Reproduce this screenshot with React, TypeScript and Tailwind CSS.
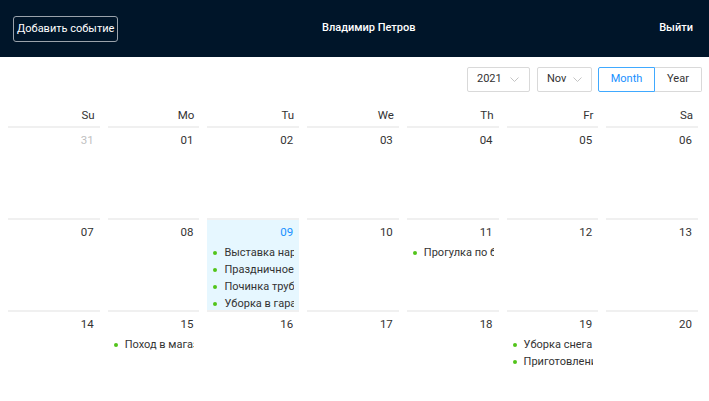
import React from "react"

type Day = {
    day: string
    muted?: boolean
    today?: boolean
    events?: string[]
}

const weekDays = ["Su", "Mo", "Tu", "We", "Th", "Fr", "Sa"]

const rows: Day[][] = [
    [
        { day: "31", muted: true },
        { day: "01" },
        { day: "02" },
        { day: "03" },
        { day: "04" },
        { day: "05" },
        { day: "06" },
    ],
    [
        { day: "07" },
        { day: "08" },
        { day: "09", today: true, events: ["Выставка народного творчества", "Праздничное чаепитие", "Починка трубы", "Уборка в гараже"] },
        { day: "10" },
        { day: "11", events: ["Прогулка по бульвару"] },
        { day: "12" },
        { day: "13" },
    ],
    [
        { day: "14" },
        { day: "15", events: ["Поход в магазин"] },
        { day: "16" },
        { day: "17" },
        { day: "18" },
        { day: "19", events: ["Уборка снега", "Приготовление ужина"] },
        { day: "20" },
    ],
]

const Chevron = () => (
    <svg width="9" height="5" viewBox="0 0 9 5" fill="none">
        <path d="M0.5 0.5 L4.5 4.5 L8.5 0.5" stroke="#c4c4c4" strokeWidth="1" />
    </svg>
)

const DateCell = ({ cell }: { cell: Day }) => {
    return (
        <div className={`mx-[4px] h-[92px] overflow-hidden border-t-2 border-[#f0f0f0] pl-[6px] pr-[5px] pt-[2px] ${cell.today ? 'bg-[#e6f7ff]' : ''}`}>
            <div className={`text-right leading-[20px] text-[11.5px] pr-[1px] ${cell.muted ? 'text-[#bfbfbf]' : cell.today ? 'text-[#1890ff]' : 'text-[#333333]'}`}>{cell.day}</div>
            {cell.events ? (
                <ul className="mt-[2px]">
                    {cell.events.map((e) => (
                        <li key={e} className="flex items-center leading-[17px] whitespace-nowrap overflow-hidden">
                            <span className="w-[4px] h-[4px] rounded-full bg-[#52c41a] shrink-0 mr-[7px]"></span>
                            <span className="text-[#333333]">{e}</span>
                        </li>
                    ))}
                </ul>
            ) : ''}
        </div>
    )
}

const App = () => {
    return (
        <div className="w-[709px] h-[401px] overflow-hidden bg-white text-[11px]" style={{ fontFamily: 'Roboto, "Open Sans", sans-serif' }}>
            <div className="h-[57px] bg-[#001529] grid grid-cols-[auto_1fr_auto] items-center pl-[13px] pr-[16px] text-white">
                <button className="h-[26px] px-[3px] border border-[#9aa2ab] rounded-[3px] leading-[24px]">Добавить событие</button>
                <div className="text-center font-medium pr-[40px]">Владимир Петров</div>
                <div className="font-medium">Выйти</div>
            </div>

            <div className="pl-[4px] pr-[7px]">
                <div className="flex justify-end pt-[10px] text-[#333333]">
                    <div className="w-[63px] h-[25px] border border-[#d9d9d9] rounded-[2px] flex items-center justify-between pl-[9px] pr-[10px]">
                        <span>2021</span>
                        <Chevron />
                    </div>
                    <div className="ml-[7px] w-[55px] h-[25px] border border-[#d9d9d9] rounded-[2px] flex items-center justify-between pl-[9px] pr-[9px]">
                        <span>Nov</span>
                        <Chevron />
                    </div>
                    <div className="ml-[6px] flex h-[25px]">
                        <div className="w-[57px] border border-[#40a9ff] rounded-l-[2px] text-[#1890ff] flex items-center justify-center">Month</div>
                        <div className="w-[47px] border border-l-0 border-[#d9d9d9] rounded-r-[2px] flex items-center justify-center">Year</div>
                    </div>
                </div>

                <div className="grid grid-cols-7 h-[34px] items-end">
                    {weekDays.map((d) => (
                        <div key={d} className="text-right leading-[18px] pr-[9px] pb-[2px] text-[11.5px] text-[#333333]">{d}</div>
                    ))}
                </div>

                {rows.map((row, i) => (
                    <div key={i} className="grid grid-cols-7">
                        {row.map((cell) => (
                            <DateCell key={cell.day} cell={cell} />
                        ))}
                    </div>
                ))}
            </div>
        </div>
    )
}

export default App
